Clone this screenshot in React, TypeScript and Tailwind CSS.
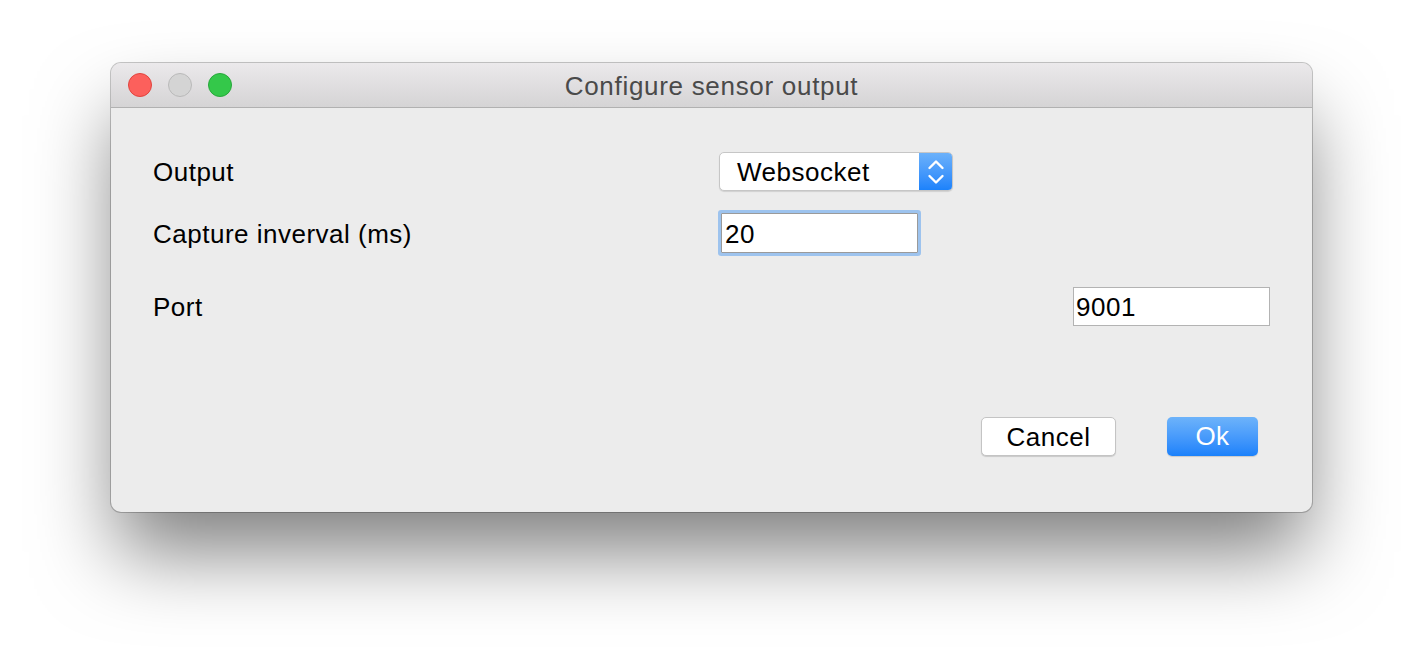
import { useState } from "react";

const FONT = "font-['Liberation_Sans','Helvetica_Neue',Arial,sans-serif]";

function TrafficLights() {
  return (
    <div className="flex items-center gap-[16px]">
      <span className="block w-[24px] h-[24px] rounded-full bg-[#fc605c] border border-[#e0443e]" />
      <span className="block w-[24px] h-[24px] rounded-full bg-[#d4d4d4] border border-[#b9b9b9]" />
      <span className="block w-[24px] h-[24px] rounded-full bg-[#34c84a] border border-[#28a73b]" />
    </div>
  );
}

function Chevrons() {
  return (
    <svg width="18" height="28" viewBox="0 0 18 28" fill="none" stroke="white" strokeWidth="2.4" strokeLinecap="round" strokeLinejoin="round">
      <path d="M2.5 10 L9 3.5 L15.5 10" />
      <path d="M2.5 18 L9 24.5 L15.5 18" />
    </svg>
  );
}

export default function App() {
  const [interval, setInterval] = useState("20");
  const [port, setPort] = useState("9001");

  return (
    <div className={`w-[1424px] h-[672px] bg-white pt-[63px] pl-[111px] ${FONT}`}>
      {/* Window */}
      <div className="w-[1201px] h-[449px] rounded-[10px] bg-[#ececec] flex flex-col overflow-hidden shadow-[0_0_0_1px_rgba(0,0,0,0.22),0_46px_80px_-6px_rgba(0,0,0,0.5)]">
        {/* Title bar */}
        <div className="relative h-[45px] shrink-0 flex items-center pl-[17px] bg-gradient-to-b from-[#ebe9eb] to-[#d5d4d5] border-b border-[#b1b1b1]">
          <TrafficLights />
          <div className="absolute inset-0 flex items-center justify-center pt-[3px] text-[26px] tracking-[0.7px] text-[#4a4a4a] pointer-events-none">
            Configure sensor output
          </div>
        </div>

        {/* Body */}
        <div className="flex flex-col pl-[42px] pr-[42px] pt-[44px] text-[26px] tracking-[0.5px] text-black">
          {/* Output */}
          <div className="flex items-center h-[39px]">
            <div className="w-[566px] pt-[2px]">Output</div>
            <div className="flex w-[234px] h-[39px] rounded-[5px] bg-white border border-[#c6c6c6] shadow-[0_1px_1px_rgba(0,0,0,0.12)] overflow-hidden">
              <div className="flex-1 flex items-center pl-[17px] pt-[2px]">Websocket</div>
              <div className="w-[33px] flex items-center justify-center bg-gradient-to-b from-[#6bb1fa] to-[#1b82fb]">
                <Chevrons />
              </div>
            </div>
          </div>

          {/* Capture interval */}
          <div className="flex items-center h-[40px] mt-[22px]">
            <div className="w-[568px] pt-[2px]">Capture inverval (ms)</div>
            <input
              value={interval}
              onChange={(e) => setInterval(e.target.value)}
              className="w-[197px] h-[40px] bg-white border border-[#9a9a9a] pl-[3px] pt-[2px] outline-none tracking-[0.5px] shadow-[0_0_0_3px_#9dc3ee] rounded-[1px]"
            />
          </div>

          {/* Port */}
          <div className="flex items-center justify-between h-[39px] mt-[34px]">
            <div className="pt-[2px]">Port</div>
            <input
              value={port}
              onChange={(e) => setPort(e.target.value)}
              className="w-[197px] h-[39px] bg-white border border-[#b3b3b3] pl-[2px] pt-[2px] outline-none tracking-[0.5px]"
            />
          </div>

          {/* Buttons */}
          <div className="flex justify-end gap-[51px] pr-[12px] mt-[91px]">
            <button className="w-[135px] h-[39px] rounded-[5px] bg-white border border-[#c4c4c4] shadow-[0_1px_1px_rgba(0,0,0,0.15)] text-black tracking-[0.5px]">
              Cancel
            </button>
            <button className="w-[91px] h-[39px] rounded-[5px] bg-gradient-to-b from-[#6db3fa] to-[#1a81fb] text-white shadow-[0_1px_1px_rgba(0,0,0,0.15)] tracking-[0.5px]">
              Ok
            </button>
          </div>
        </div>
      </div>
    </div>
  );
}
